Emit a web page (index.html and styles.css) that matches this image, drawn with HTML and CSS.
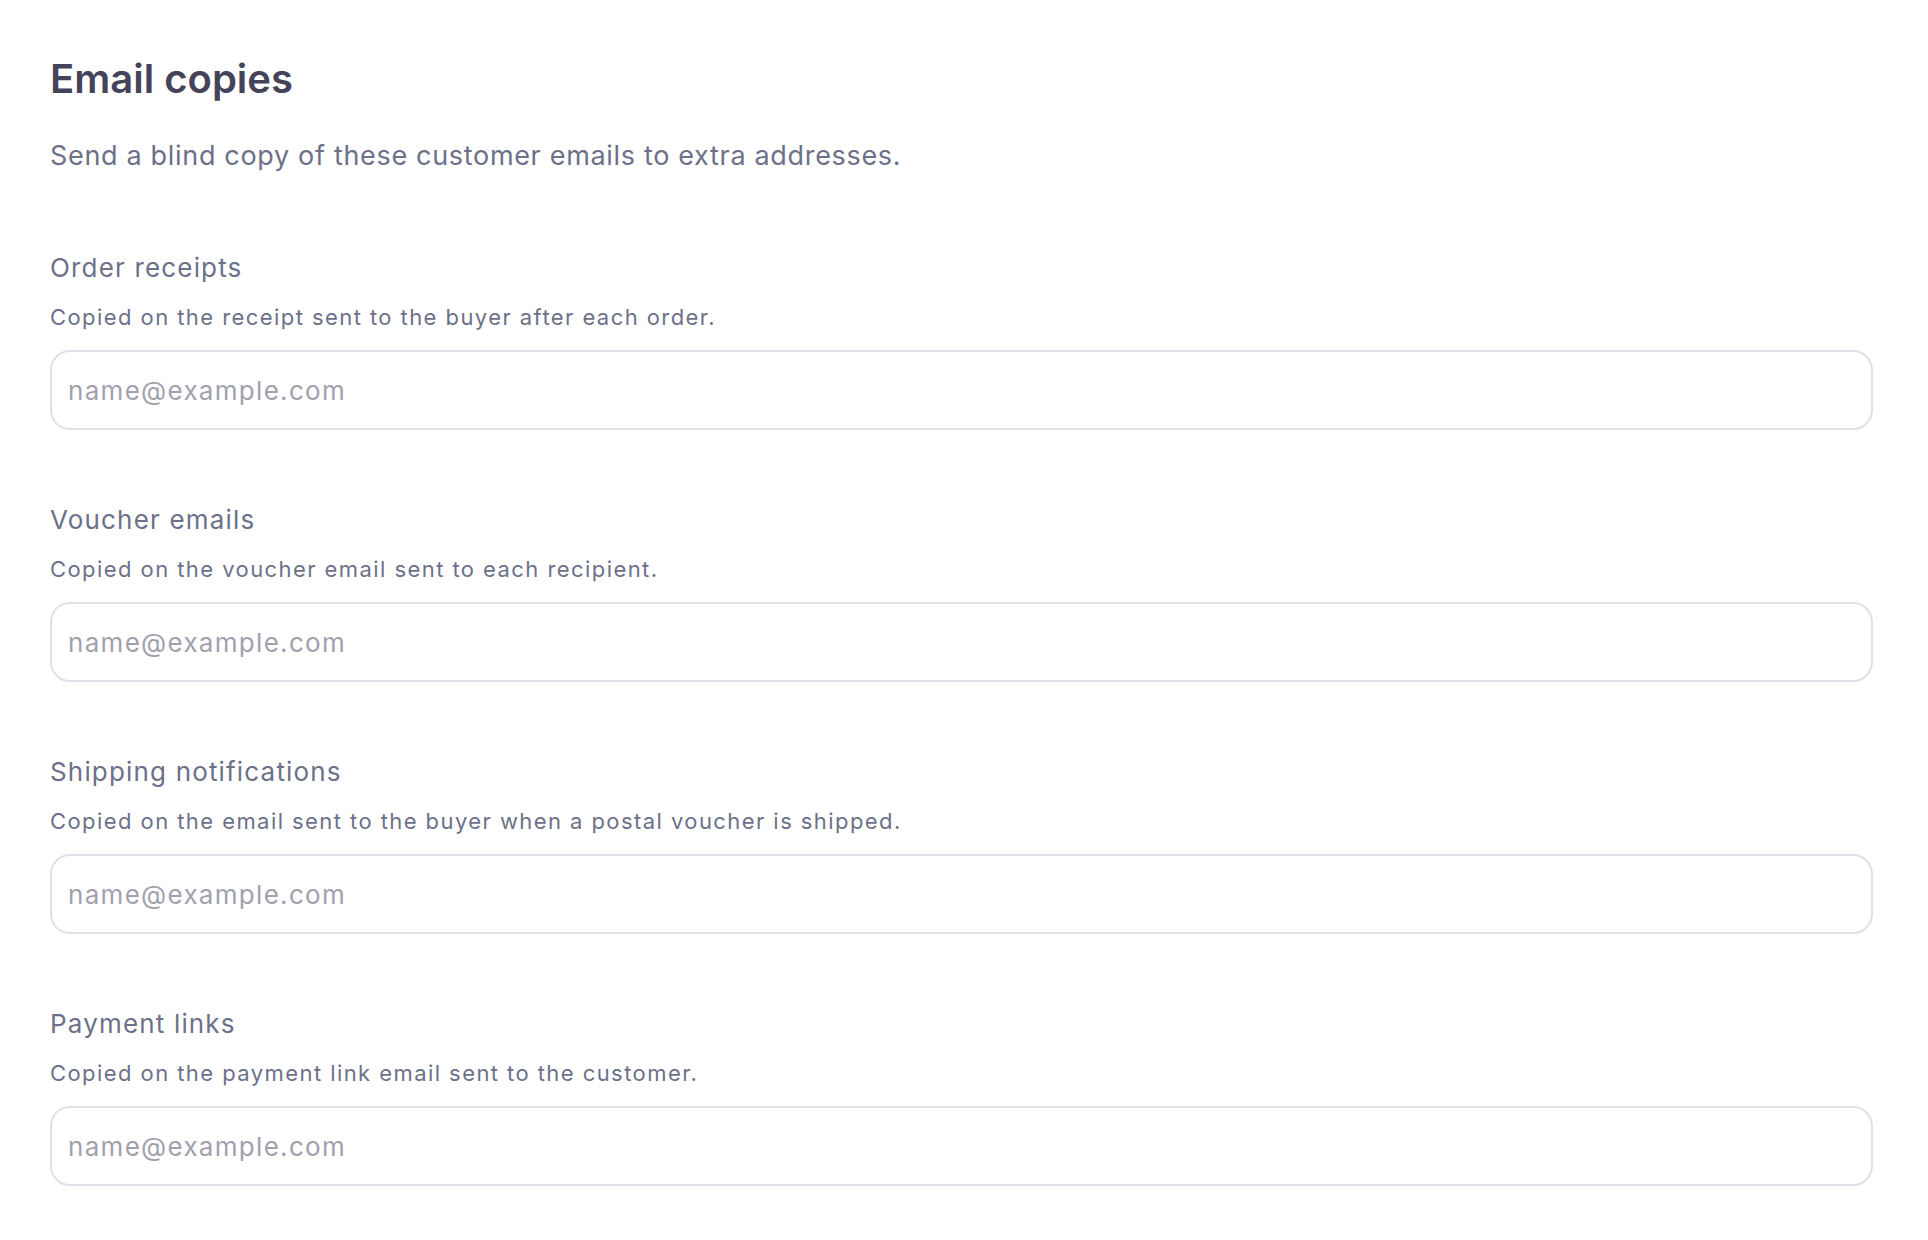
FILE: index.html
```html
<!DOCTYPE html>
<html lang="en">
<head>
<meta charset="utf-8">
<title>Email copies</title>
<link rel="stylesheet" href="styles.css">
</head>
<body>
<main class="page">
  <header class="intro">
    <h1 class="title">Email copies</h1>
    <p class="lead">Send a blind copy of these customer emails to extra addresses.</p>
  </header>
  <div class="fields">
    <div class="field">
      <label class="label" for="f1">Order receipts</label>
      <p class="help">Copied on the receipt sent to the buyer after each order.</p>
      <input class="input" id="f1" type="email" placeholder="name@example.com">
    </div>
    <div class="field">
      <label class="label" for="f2">Voucher emails</label>
      <p class="help">Copied on the voucher email sent to each recipient.</p>
      <input class="input" id="f2" type="email" placeholder="name@example.com">
    </div>
    <div class="field">
      <label class="label" for="f3">Shipping notifications</label>
      <p class="help">Copied on the email sent to the buyer when a postal voucher is shipped.</p>
      <input class="input" id="f3" type="email" placeholder="name@example.com">
    </div>
    <div class="field">
      <label class="label" for="f4">Payment links</label>
      <p class="help">Copied on the payment link email sent to the customer.</p>
      <input class="input" id="f4" type="email" placeholder="name@example.com">
    </div>
  </div>
</main>
</body>
</html>
```

FILE: styles.css
```css
* { box-sizing: border-box; }
html, body { margin: 0; background: #ffffff; }
body {
  font-family: Inter, "Noto Sans", sans-serif;
  color: #6c7189;
}
.page {
  padding: 57px 55px 40px 50px;
}
.title {
  margin: 0;
  font-size: 40px;
  line-height: 44px;
  font-weight: 600;
  color: #45435a;
}
.lead {
  margin: 37px 0 0 0;
  font-size: 27px;
  line-height: 36px;
  color: #6c7189;
  letter-spacing: 0.025em;
}
.fields {
  margin-top: 76px;
  display: flex;
  flex-direction: column;
  gap: 72px;
}
.field {
  display: flex;
  flex-direction: column;
}
.label {
  font-size: 26px;
  line-height: 36px;
  color: #6c7189;
  letter-spacing: 0.045em;
}
.help {
  margin: 16px 0 0 0;
  font-size: 22px;
  line-height: 30px;
  color: #6c7189;
  letter-spacing: 0.065em;
}
.input {
  margin-top: 18px;
  width: 100%;
  height: 80px;
  border: 2px solid #dfe1e8;
  border-radius: 20px;
  padding: 0 16px;
  font-family: Inter, "Noto Sans", sans-serif;
  font-size: 26px;
  letter-spacing: 0.05em;
  color: #45435a;
  background: #ffffff;
  outline: none;
}
.input::placeholder {
  color: #a1a1ae;
  opacity: 1;
}
```
